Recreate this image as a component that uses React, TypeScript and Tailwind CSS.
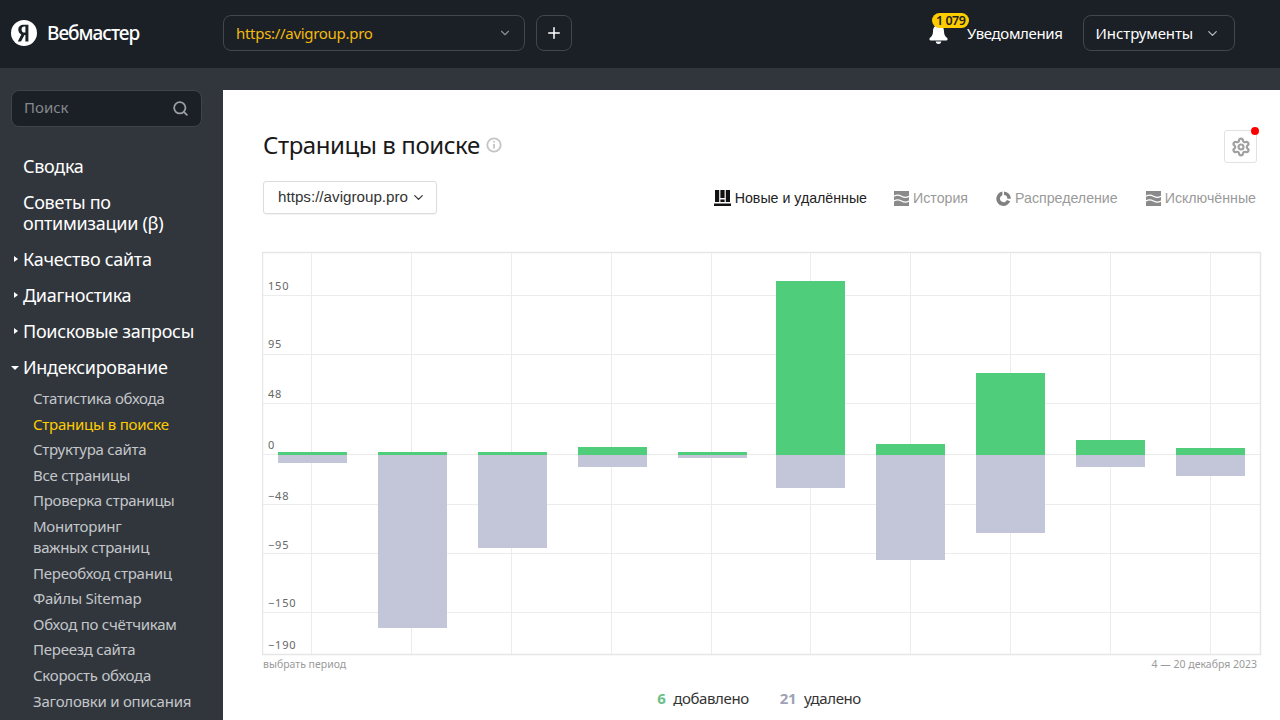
import React from "react";
import { ChevronDown, Search, Plus, Settings } from "lucide-react";

const FONT = "[font-family:'Noto_Sans','Open_Sans',sans-serif]";

const bars = [
  [278, 452, 463], [378, 452, 628], [478, 452, 548], [578, 447, 467], [678, 452, 458],
  [776, 281, 488], [876, 444, 560], [976, 373, 533], [1076, 440, 467], [1176, 448, 476],
];
const vLines = [311, 411, 511, 611, 711, 810, 910, 1010, 1110, 1210];
const hLines = [295, 354, 403, 454, 504, 553, 612];
const yLabels: [string, number][] = [["150", 290], ["95", 348], ["48", 398], ["0", 449], ["−48", 500], ["−95", 549], ["−150", 607], ["−190", 649]];

function Waves() {
  return (
    <svg width="15" height="15" viewBox="0 0 15 15">
      <rect width="15" height="15" fill="#8a8a8a" />
      <path d="M0 5.2C2.5 3.6 4.5 3.6 7.5 5.2S12.5 6.8 15 5.2M0 10C2.5 8.4 4.5 8.4 7.5 10S12.5 11.6 15 10" fill="none" stroke="#fff" strokeWidth="1.3" />
    </svg>
  );
}

function Pie() {
  return (
    <svg width="15" height="15" viewBox="0 0 15 15" fill="#808080">
      <path d="M6.4.6v3.6a3.6 3.6 0 1 0 4.5 4.7l3.3 1.4A7.2 7.2 0 1 1 6.4.6z" />
      <path d="M8 .4a7.2 7.2 0 0 1 6.8 7.4h-3.5A3.7 3.7 0 0 0 8 4z" />
    </svg>
  );
}

function NewIcon() {
  return (
    <svg width="17" height="16" viewBox="0 0 17 16" fill="#111">
      <path d="M1 0h4.2v12H1zM6.4 0h4.2v8H6.4zM6.4 9.5h4.2V12H6.4zM11.8 0H16v12h-4.2zM0 13.5h17V16H0z" />
    </svg>
  );
}

function BellIcon() {
  return (
    <svg width="21" height="19" viewBox="0 0 21 19" fill="#fff">
      <path d="M10.5 0C14.5 0 16 3 16 6.5c0 3 1 4.6 3.2 6.6.8.8.4 2.4-1 2.4H2.8c-1.4 0-1.8-1.6-1-2.4C4 11.1 5 9.5 5 6.5 5 3 6.5 0 10.5 0z" />
      <path d="M7.8 16.5h5.4a2.7 2.5 0 0 1-5.4 0z" />
    </svg>
  );
}

function Tab({ icon, label, active, className }: { icon: React.ReactNode; label: string; active?: boolean; className: string }) {
  return (
    <div className={`flex items-center gap-[4px] ${className}`}>
      {icon}
      <span className={`text-[14.2px] leading-none [font-family:'Liberation_Sans',sans-serif] ${active ? "text-[#222]" : "text-[#9a9a9a]"}`}>{label}</span>
    </div>
  );
}

function Top({ label, arrow, className }: { label: string; arrow?: "r" | "d"; className?: string }) {
  return (
    <div className={`relative pl-[23px] text-[18px] leading-[21px] tracking-[-0.3px] text-white ${className ?? ""}`}>
      {arrow === "r" && <span className="absolute left-[14px] top-[7px] h-0 w-0 border-y-[3.5px] border-l-[4px] border-y-transparent border-l-white" />}
      {arrow === "d" && <span className="absolute left-[11px] top-[9px] h-0 w-0 border-x-[4px] border-t-[4px] border-x-transparent border-t-white" />}
      {label}
    </div>
  );
}

function Sub({ label, active, className }: { label: string; active?: boolean; className?: string }) {
  return (
    <div className={`pl-[33px] text-[15px] leading-[21px] tracking-[-0.25px] ${active ? "text-[#ffcc00]" : "text-[#c4c6c9]"} ${className ?? ""}`}>
      {label}
    </div>
  );
}

export default function App() {
  return (
    <div className={`flex h-[720px] w-[1280px] flex-col overflow-hidden bg-[#31363d] ${FONT}`}>
      <header className="flex h-[68px] shrink-0 items-center bg-[#1b2026] pb-[2px]">
        <div className="flex w-[223px] shrink-0 items-center pl-[11px]">
          <svg width="26" height="26" viewBox="0 0 26 26">
            <circle cx="13" cy="13" r="13" fill="#fff" />
            <path d="M14.4 21.5h3V4.7h-4.4c-3.7 0-5.7 1.9-5.7 4.7 0 2.3 1.1 3.7 3 5L6.8 21.5h3.2l3.5-6.6h.9zm0-9h-1c-1.8 0-2.8-1-2.8-3.1 0-2.1 1.1-2.9 2.7-2.9h1.100z" fill="#1b2026" />
          </svg>
          <span className="ml-[10px] text-[19px] font-medium leading-none tracking-[-1px] text-white">Вебмастер</span>
        </div>
        <div className="flex h-[36px] w-[302px] items-center justify-between rounded-[8px] border border-[#43474d] pl-[12px] pr-[12px]">
          <span className="text-[15px] tracking-[-0.3px] text-[#f2b90f]">https://avigroup.pro</span>
          <ChevronDown size={14} className="text-[#8b8e92]" />
        </div>
        <div className="ml-[11px] flex h-[36px] w-[36px] items-center justify-center rounded-[8px] border border-[#43474d]">
          <Plus size={18} strokeWidth={2} className="text-white" />
        </div>
        <div className="relative ml-[356px] flex items-center">
          <div className="mt-[3px]"><BellIcon /></div>
          <span className="absolute left-[4px] top-[-9px] rounded-full bg-[#fc0] px-[4px] text-[12.5px] font-semibold leading-[15px] tracking-[-0.5px] text-[#222]">1 079</span>
          <span className="ml-[18px] text-[15px] tracking-[-0.35px] text-white">Уведомления</span>
        </div>
        <div className="ml-[20px] flex h-[36px] w-[152px] items-center justify-between rounded-[8px] border border-[#43474d] pl-[12px] pr-[14px]">
          <span className="text-[15px] tracking-[-0.1px] text-white">Инструменты</span>
          <ChevronDown size={15} className="text-[#b9bbbe]" />
        </div>
      </header>

      <div className="flex min-h-0 flex-1 pt-[22px]">
        <aside className="w-[223px] shrink-0 overflow-hidden">
          <div className="mx-[11px] flex h-[37px] w-[191px] items-center justify-between rounded-[8px] border border-[#3f444b] bg-[#1b2026] pl-[12px] pr-[12px]">
            <span className="pb-[2px] text-[15px] text-[#85888d]">Поиск</span>
            <Search size={17} strokeWidth={2.5} className="text-[#9b9ea2]" />
          </div>
          <div className="pt-[29px]">
            <Top label="Сводка" />
            <Top label="Советы по" className="mt-[15px]" />
            <Top label="оптимизации (β)" />
            <Top label="Качество сайта" arrow="r" className="mt-[15px]" />
            <Top label="Диагностика" arrow="r" className="mt-[15px]" />
            <Top label="Поисковые запросы" arrow="r" className="mt-[15px]" />
            <Top label="Индексирование" arrow="d" className="mt-[15px]" />
            <div className="mt-[10px] flex flex-col gap-[4.6px]">
              <Sub label="Статистика обхода" />
              <Sub label="Страницы в поиске" active />
              <Sub label="Структура сайта" />
              <Sub label="Все страницы" />
              <Sub label="Проверка страницы" />
              <div>
                <Sub label="Мониторинг" />
                <Sub label="важных страниц" />
              </div>
              <Sub label="Переобход страниц" />
              <Sub label="Файлы Sitemap" />
              <Sub label="Обход по счётчикам" />
              <Sub label="Переезд сайта" />
              <Sub label="Скорость обхода" />
              <Sub label="Заголовки и описания" />
            </div>
          </div>
        </aside>

        <main className="min-w-0 flex-1 bg-white pl-[40px] pr-[23px]">
          <div className="flex h-[73px] items-end justify-between">
            <div className="flex items-center pb-[2px]">
              <h1 className="text-[24px] font-normal leading-[32px] tracking-[-0.43px] text-[#1a1a1a]">Страницы в поиске</h1>
              <svg width="16" height="16" viewBox="0 0 16 16" className="ml-[6px]" fill="none" stroke="#c4c4c4" strokeWidth="1.8">
                <circle cx="8" cy="8" r="6.7" />
                <path d="M8 7v4.5M8 4v1.6" />
              </svg>
            </div>
            <div className="relative flex h-[33px] w-[33px] items-center justify-center rounded-[3px] border border-[#e2e2e2]">
              <Settings size={20} strokeWidth={2.6} className="text-[#a0a0a0]" />
              <span className="absolute right-[-3px] top-[-4px] h-[8px] w-[8px] rounded-full bg-[#f00]" />
            </div>
          </div>

          <div className="mt-[18px] flex items-center">
            <div className="flex h-[33px] w-[174px] items-center rounded-[3px] border border-[#dcdcdc] pl-[14px] shadow-[0_1px_1px_rgba(0,0,0,0.05)]">
              <span className="text-[15.2px] text-[#333] [font-family:'Liberation_Sans',sans-serif]">https://avigroup.pro</span>
              <ChevronDown size={15} strokeWidth={2} className="ml-[3px] text-[#333]" />
            </div>
            <div className="ml-auto flex items-center pr-[1px] pt-[1px]">
              <Tab className="" icon={<NewIcon />} label="Новые и удалённые" active />
              <Tab className="ml-[27px]" icon={<Waves />} label="История" />
              <Tab className="ml-[28px]" icon={<Pie />} label="Распределение" />
              <Tab className="ml-[28px]" icon={<Waves />} label="Исключённые" />
            </div>
          </div>

          <svg width="1000" height="405" viewBox="262 251 1000 405" className="-ml-[1px] mt-[37px] block">
            <rect x="262.5" y="252.5" width="998" height="402" fill="#fff" stroke="#e6e6e6" strokeWidth="1.5" />
            {vLines.map((x) => (
              <line key={x} x1={x + 0.5} x2={x + 0.5} y1={253} y2={654} stroke="#ececec" />
            ))}
            {hLines.map((y) => (
              <line key={y} x1={263} x2={1260} y1={y + 0.5} y2={y + 0.5} stroke="#ececec" />
            ))}
            {bars.map(([x, top, bottom]) => (
              <g key={x}>
                <rect x={x} y={top} width={69} height={455 - top} fill="#50cd7a" />
                <rect x={x} y={455} width={69} height={bottom - 455} fill="#c2c6d8" />
              </g>
            ))}
            {yLabels.map(([t, y]) => (
              <text key={t} x="268" y={y} fontSize="11" letterSpacing="0.8" fill="#666" fontFamily="'Noto Sans',sans-serif">{t}</text>
            ))}
          </svg>

          <div className="mt-[1px] flex items-center justify-between text-[10.5px] leading-[14px] text-[#9a9a9a]">
            <span>выбрать период</span>
            <span>4 — 20 декабря 2023</span>
          </div>

          <div className="mt-[17px] flex justify-center gap-[31px] pr-[2px] text-[15px] leading-[20px] tracking-[-0.4px] text-[#333]">
            <span><b className="mr-[8px] font-bold text-[#6cc08b]">6</b>добавлено</span>
            <span><b className="mr-[8px] font-bold text-[#9ea2b4]">21</b>удалено</span>
          </div>
        </main>
      </div>
    </div>
  );
}
